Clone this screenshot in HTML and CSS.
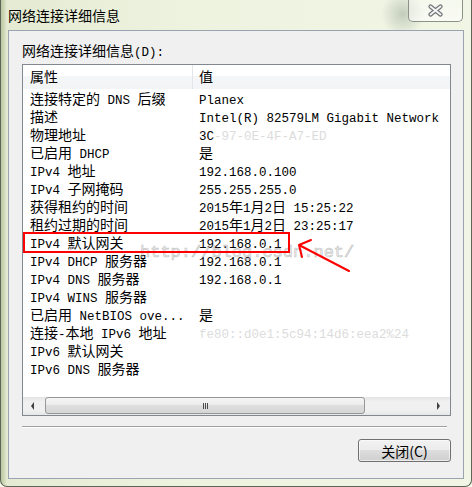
FILE: index.html
```html
<!DOCTYPE html>
<html>
<head>
	<meta charset="utf-8">
	<title>网络连接详细信息</title>
	<link rel="stylesheet" href="styles.css">
</head>
<body>

	<div class="window">
		<div class="titlebar">
			<span class="title">网络连接详细信息</span>
			<div class="close">
				<svg width="17" height="13" viewBox="0 0 17 13">
					<path d="M3.5 2.5 L13.5 10.5 M13.5 2.5 L3.5 10.5" stroke="#6f7276" stroke-width="4.2" stroke-linecap="round"/>
					<path d="M3.5 2.5 L13.5 10.5 M13.5 2.5 L3.5 10.5" stroke="#f4f4f4" stroke-width="2" stroke-linecap="round"/>
				</svg>
			</div>
		</div>

		<div class="client">
			<div class="caption">网络连接详细信息<span class="en">(D):</span></div>

			<div class="listbox">
				<div class="head">
					<div class="prop">属性</div>
					<div class="val">值</div>
				</div>
				<div class="rows">
					<div class="row"><div class="prop">连接特定的<span class="en"> DNS </span>后缀</div><div class="val"><span class="en">Planex</span></div></div>
					<div class="row"><div class="prop">描述</div><div class="val"><span class="en">Intel(R) 82579LM Gigabit Network</span></div></div>
					<div class="row"><div class="prop">物理地址</div><div class="val"><span class="en">3C</span><span class="en faint">-97-0E-4F-A7-ED</span></div></div>
					<div class="row"><div class="prop">已启用<span class="en"> DHCP</span></div><div class="val">是</div></div>
					<div class="row"><div class="prop"><span class="en">IPv4 </span>地址</div><div class="val"><span class="en">192.168.0.100</span></div></div>
					<div class="row"><div class="prop"><span class="en">IPv4 </span>子网掩码</div><div class="val"><span class="en">255.255.255.0</span></div></div>
					<div class="row"><div class="prop">获得租约的时间</div><div class="val"><span class="en">2015</span>年<span class="en">1</span>月<span class="en">2</span>日<span class="en"> 15:25:22</span></div></div>
					<div class="row"><div class="prop">租约过期的时间</div><div class="val"><span class="en">2015</span>年<span class="en">1</span>月<span class="en">2</span>日<span class="en"> 23:25:17</span></div></div>
					<div class="row"><div class="prop"><span class="en">IPv4 </span>默认网关</div><div class="val"><span class="en">192.168.0.1</span></div></div>
					<div class="row"><div class="prop"><span class="en">IPv4 DHCP </span>服务器</div><div class="val"><span class="en">192.168.0.1</span></div></div>
					<div class="row"><div class="prop"><span class="en">IPv4 DNS </span>服务器</div><div class="val"><span class="en">192.168.0.1</span></div></div>
					<div class="row"><div class="prop"><span class="en">IPv4 WINS </span>服务器</div><div class="val"></div></div>
					<div class="row"><div class="prop">已启用<span class="en"> NetBIOS ove...</span></div><div class="val">是</div></div>
					<div class="row"><div class="prop">连接<span class="en">-</span>本地<span class="en"> IPv6 </span>地址</div><div class="val"><span class="en faint">fe80::d0e1:5c94:14d6:eea2%24</span></div></div>
					<div class="row"><div class="prop"><span class="en">IPv6 </span>默认网关</div><div class="val"></div></div>
					<div class="row"><div class="prop"><span class="en">IPv6 DNS </span>服务器</div><div class="val"></div></div>
				</div>

				<div class="hscroll">
					<div class="arrow left"></div>
					<div class="track">
						<div class="thumb"><span class="grip"></span></div>
					</div>
					<div class="arrow right"></div>
				</div>

				<div class="mark">http://blog.csdn.net/</div>
				<svg class="note" width="427" height="350">
					<rect x="1" y="168" width="265" height="19" fill="none" stroke="#f00" stroke-width="2"/>
					<path d="M326 206 L276 180 M276 180 L288 175 M276 180 L279 192" fill="none" stroke="#f00" stroke-width="2" stroke-linecap="round"/>
				</svg>
			</div>

			<div class="sep"></div>
			<button class="btn">关闭(C)</button>
		</div>
	</div>

</body>
</html>
```

FILE: styles.css
```css
*{
	margin: 0;
	padding: 0;
	box-sizing: border-box;
}
body{
	background: #f6f8ea;
	font-family: "Noto Sans CJK SC", sans-serif;
	font-size: 14px;
	color: #000;
}
.window{
	width: 472px;
	height: 487px;
	display: flex;
	flex-direction: column;
	padding: 0 7px 7px 7px;
	border: 1px solid #5d6656;
	border-top: none;
	border-radius: 0 0 7px 7px;
	background:
		radial-gradient(circle at 402px 14px, rgba(110,130,115,0.35), transparent 22px),
		linear-gradient(90deg, #b9c7a0 0, #e4ebd2 6px, #eef3e0 40%, #f1f5e4 100%);
}
.titlebar{
	height: 33px;
	display: flex;
	justify-content: space-between;
	align-items: flex-start;
}
.title{
	align-self: center;
	line-height: 18px;
	padding-bottom: 1px;
}
.close{
	width: 55px;
	height: 22px;
	margin-right: 1px;
	display: flex;
	justify-content: center;
	align-items: center;
	border: 1px solid #8c928a;
	border-top: none;
	border-radius: 0 0 5px 5px;
	background: linear-gradient(rgba(255,255,255,0.35), rgba(255,255,255,0.6));
}

.client{
	flex: 1;
	display: flex;
	flex-direction: column;
	background: #f0f0f0;
	border: 1px solid #9aa4b0;
	padding: 10px 12px 16px 13px;
}
.caption{
	line-height: 18px;
	margin-bottom: 2px;
}
.en{
	font-family: "Liberation Mono", monospace;
	font-size: 12.5px;
	white-space: pre;
}
.faint{
	color: #dcdcdc;
}

.listbox{
	position: relative;
	width: 429px;
	height: 352px;
	display: flex;
	flex-direction: column;
	background: #fff;
	border: 1px solid #828790;
}
.head{
	display: flex;
	height: 24px;
	line-height: 23px;
	background: linear-gradient(#fff 0, #fff 45%, #f5f6f7 45%, #f3f4f6 100%);
}
.head .prop{
	border-right: 1px solid #e3e5e8;
}
.rows{
	flex: 1;
}
.row{
	display: flex;
	height: 18px;
	line-height: 18px;
}
.prop{
	width: 170px;
	padding-left: 7px;
	white-space: nowrap;
	overflow: hidden;
}
.val{
	flex: 1;
	padding-left: 6px;
	white-space: nowrap;
	overflow: hidden;
}

.hscroll{
	display: flex;
	height: 18px;
	background: linear-gradient(#e4e4e4, #f0f0f0 25%, #f0f0f0 75%, #e6e6e6);
}
.arrow{
	display: flex;
	align-items: center;
	justify-content: center;
}
.arrow::before{
	content: "";
	border: 4px solid transparent;
}
.arrow.left{
	width: 18px;
}
.arrow.left::before{
	border-left: none;
	border-right: 3px solid #404040;
}
.arrow.right{
	width: 24px;
}
.arrow.right::before{
	border-right: none;
	border-left: 3px solid #404040;
}
.track{
	flex: 1;
	padding: 0 0 0 4px;
}
.thumb{
	width: 320px;
	height: 17px;
	display: flex;
	justify-content: center;
	align-items: center;
	border: 1px solid #979797;
	border-radius: 3px;
	background: linear-gradient(#f5f5f5, #ebebeb 50%, #dedede 50%, #d6d6d6);
}
.grip{
	width: 5px;
	height: 6px;
	background: repeating-linear-gradient(90deg, #4a4a4a 0 1px, transparent 1px 2px);
}

.mark{
	position: absolute;
	left: 117px;
	top: 178px;
	font-family: "Liberation Mono", monospace;
	font-size: 17px;
	color: rgba(190,190,190,0.25);
	-webkit-text-stroke: 0.6px rgba(170,170,170,0.7);
}
.note{
	position: absolute;
	left: 0;
	top: 0;
}

.sep{
	width: 425px;
	margin-top: 10px;
	border-top: 1px solid #a0a0a0;
	border-bottom: 1px solid #fff;
}
.btn{
	align-self: flex-end;
	width: 93px;
	height: 23px;
	margin-top: 11px;
	font-family: "Noto Sans CJK SC", sans-serif;
	font-size: 14px;
	line-height: 20px;
	color: #000;
	border: 1px solid #707070;
	border-radius: 3px;
	background: linear-gradient(#f2f2f2 0, #ebebeb 50%, #dddddd 50%, #cfcfcf 100%);
	box-shadow: inset 0 0 0 1px rgba(255,255,255,0.6);
}
```
